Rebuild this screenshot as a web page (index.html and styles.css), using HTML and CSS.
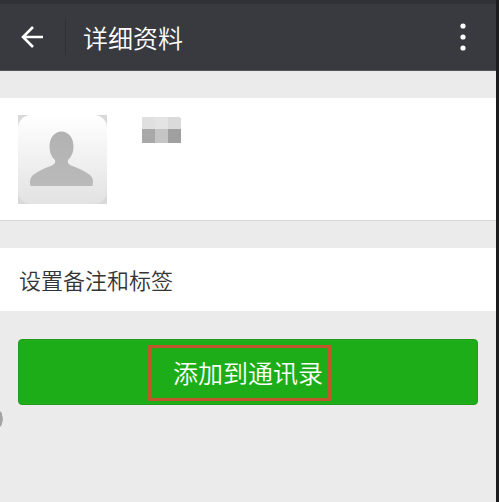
FILE: index.html
```html
<!DOCTYPE html>
<html lang="zh-CN">
<head>
    <meta charset="UTF-8">
    <meta name="viewport" content="width=device-width, initial-scale=1.0">
    <title>详细资料</title>
    <link rel="stylesheet" href="styles.css">
</head>
<body>
    <div class="screen">
        <header class="topbar">
            <button type="button" class="icon-button back" aria-label="返回">
                <svg width="24" height="24" viewBox="0 0 24 24" fill="none" stroke="#fff" stroke-width="2.6">
                    <path d="M23 12H3M13 2L3 12l10 10"/>
                </svg>
            </button>
            <h1 class="title">详细资料</h1>
            <button type="button" class="icon-button more" aria-label="更多">
                <svg width="6" height="28" viewBox="0 0 6 28" fill="#fff">
                    <circle cx="3" cy="3" r="2.6"/>
                    <circle cx="3" cy="14" r="2.6"/>
                    <circle cx="3" cy="25" r="2.6"/>
                </svg>
            </button>
        </header>
        <main>
            <section class="profile">
                <svg class="avatar" width="89" height="89" viewBox="0 0 89 89">
                    <defs>
                        <linearGradient id="tile" x1="0" y1="0" x2="0" y2="1">
                            <stop offset="0" stop-color="#fff"/>
                            <stop offset="1" stop-color="#e2e2e2"/>
                        </linearGradient>
                        <linearGradient id="person" x1="0" y1="0" x2="0" y2="1">
                            <stop offset="0" stop-color="#b2b2b2"/>
                            <stop offset="1" stop-color="#bababa"/>
                        </linearGradient>
                    </defs>
                    <rect width="89" height="89" fill="#d9d9d9"/>
                    <rect width="89" height="89" rx="13" fill="url(#tile)"/>
                    <path fill="url(#person)" d="M43.500 16.500C50.500 16.500 55.500 23 55.500 31.500C55.500 37 53.500 42 50 45C49.500 47.500 50 49 53 50.500C60 53 67 56 72 60C75 63 75.500 66 74.500 71H12.500C11.500 66 12 63 15 60C20 56 27 53 34 50.500C37 49 37.500 47.500 37 45C33.500 42 31.500 37 31.500 31.500C31.500 23 36.500 16.500 43.500 16.500Z"/>
                </svg>
                <svg class="hidden-name" width="39" height="26" viewBox="0 0 39 26" shape-rendering="crispEdges">
                    <path fill="#e0e0e0" d="M0 0h13v12H0z"/>
                    <path fill="#e4e4e4" d="M13 0h13v12H13z"/>
                    <path fill="#dadada" d="M26 0h11l2 2v10H26z"/>
                    <path fill="#a8a8a8" d="M0 12h13v14H0z"/>
                    <path fill="#c5c5c5" d="M13 12h13v14H13z"/>
                    <path fill="#a0a0a0" d="M26 12h13v14H26z"/>
                </svg>
            </section>
            <a class="row" href="#">设置备注和标签</a>
            <div class="actions">
                <button type="button" class="add-button">添加到通讯录<span class="marker"></span></button>
            </div>
        </main>
        <span class="side-handle"></span>
    </div>
</body>
</html>
```

FILE: styles.css
```css
*{
    box-sizing: border-box;
    margin: 0;
    padding: 0;
}
body{
    background: #ebebeb;
    font-family: "Noto Sans CJK SC", sans-serif;
    font-weight: 350;
    color: #353535;
}
button{
    border: 0;
    background: transparent;
    font-family: inherit;
    font-weight: inherit;
    cursor: pointer;
}
.screen{
    position: relative;
    min-height: 100vh;
    overflow: hidden;
    border-right: 3px solid #1c1c1e;
}
.topbar{
    display: flex;
    align-items: center;
    height: 71px;
    padding-right: 30px;
    border-top: 4px solid #303136;
    border-bottom: 1px solid #545458;
    background: #393a3f;
}
.icon-button{
    display: flex;
    align-items: center;
    height: 36px;
}
.back{
    width: 66px;
    padding-left: 20px;
    border-right: 1px solid #2f3034;
}
.title{
    flex: 1;
    padding-left: 17px;
    font-size: 25px;
    font-weight: inherit;
    line-height: 36px;
    color: #fff;
}
.profile{
    display: flex;
    align-items: flex-start;
    gap: 35px;
    margin-top: 27px;
    padding: 17px 18px 16px;
    border-bottom: 1px solid #d9d9d9;
    background: #fff;
}
.hidden-name{
    margin-top: 2px;
}
.row{
    display: block;
    margin-top: 27px;
    padding: 15px 19px 16px;
    background: #fff;
    font-size: 22px;
    line-height: 32px;
    color: #353535;
    text-decoration: none;
}
.actions{
    padding: 28px 18px;
}
.add-button{
    position: relative;
    display: block;
    width: 100%;
    height: 66px;
    border: 1px solid #229a20;
    border-radius: 4px;
    background: #1cad19;
    font-size: 25px;
    line-height: 36px;
    color: #fff;
}
/* highlight frame around the button label */
.marker{
    position: absolute;
    top: 5px;
    bottom: 3px;
    left: calc(50% - 100px);
    width: 183px;
    border: 3px solid #c0562c;
}
.side-handle{
    position: absolute;
    top: 404px;
    left: -26px;
    width: 30px;
    height: 30px;
    border: 1px solid #f8f8f8;
    border-radius: 50%;
    background: #a4a4a4;
}
```
